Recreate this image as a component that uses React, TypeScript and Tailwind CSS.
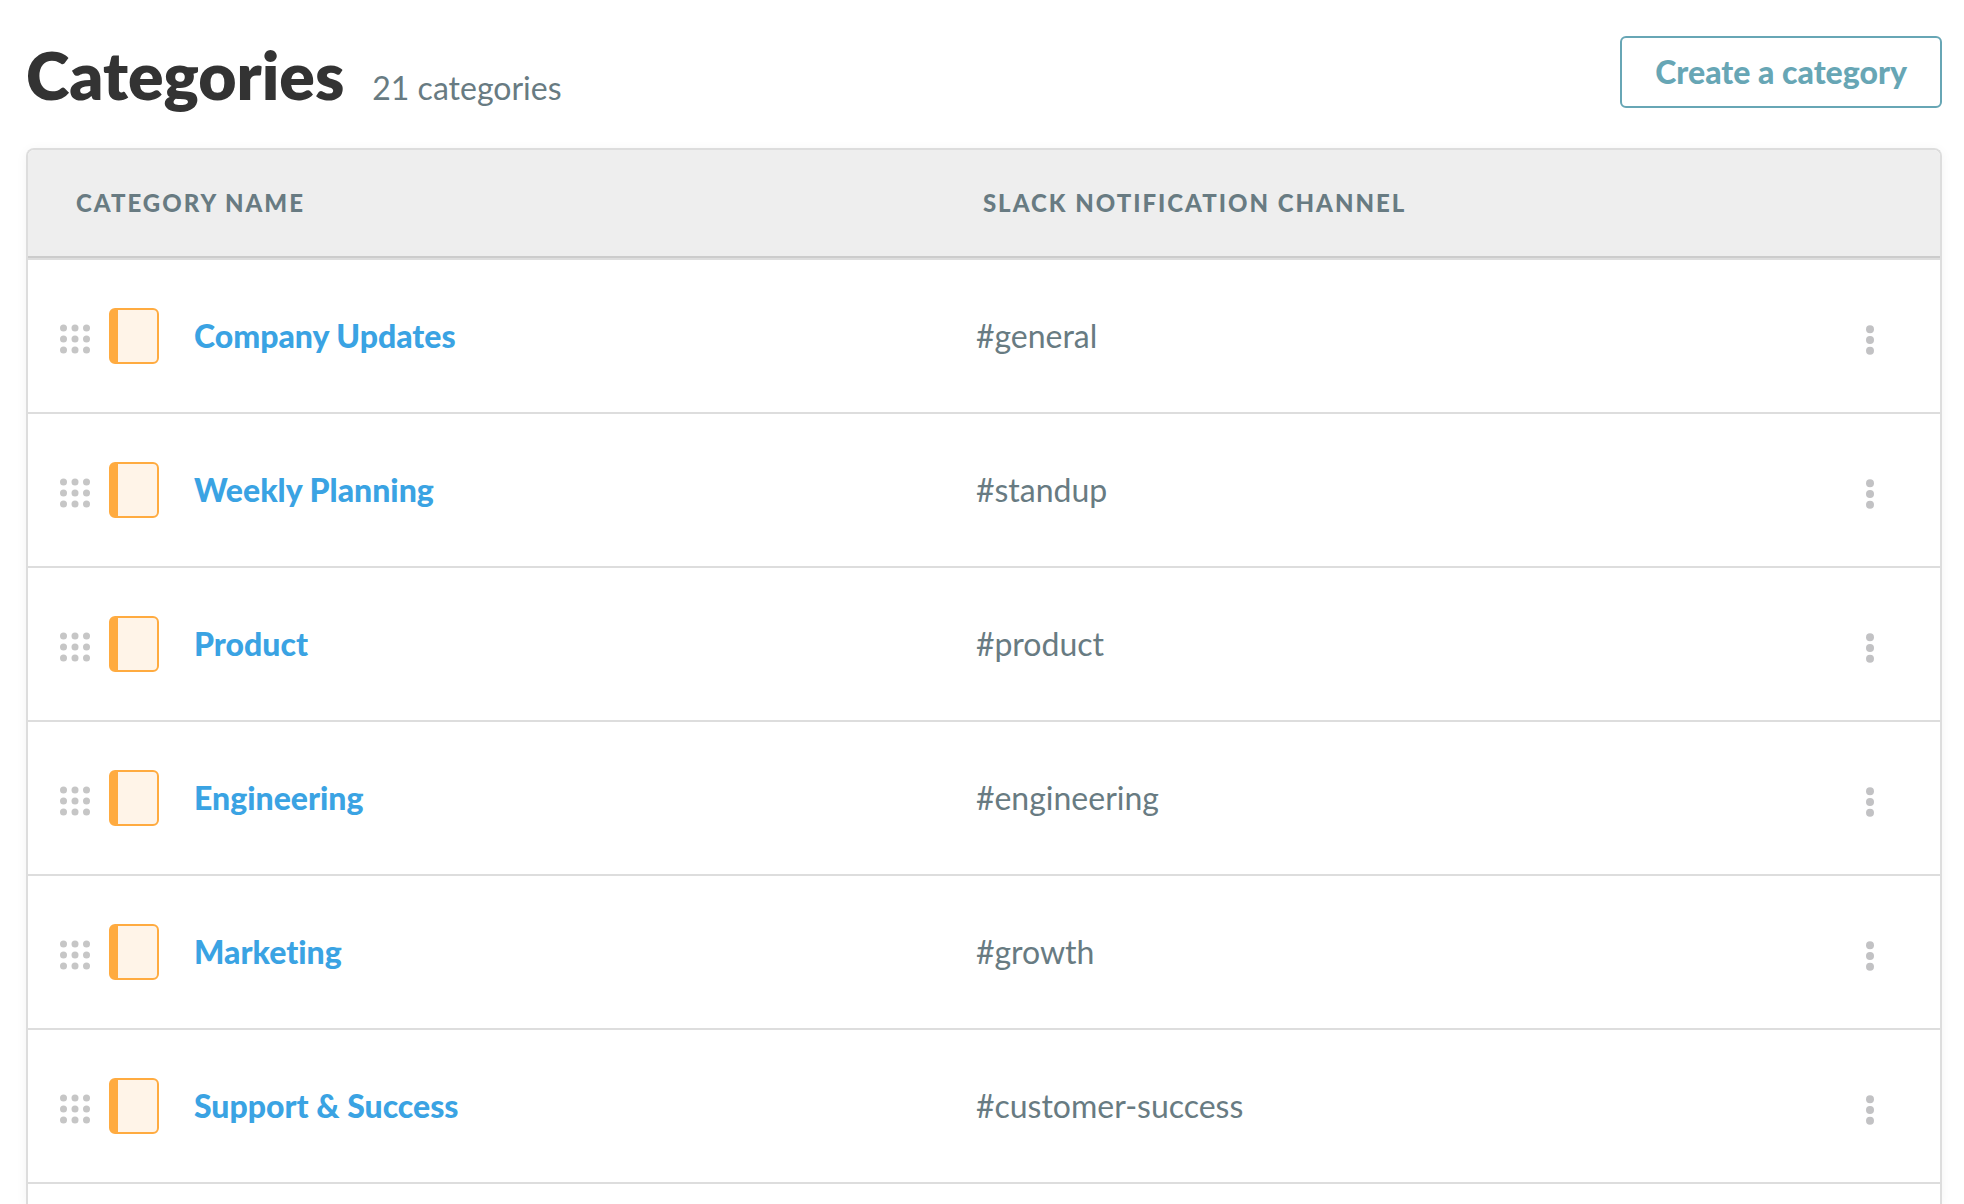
const categories = [
  { name: 'Company Updates', channel: '#general' },
  { name: 'Weekly Planning', channel: '#standup' },
  { name: 'Product', channel: '#product' },
  { name: 'Engineering', channel: '#engineering' },
  { name: 'Marketing', channel: '#growth' },
  { name: 'Support & Success', channel: '#customer-success' },
];

const total = 21;

const DragHandle = () => (
  <button type="button" aria-label="Reorder" className="mt-1.5 cursor-grab text-[#c6c6c6]">
    <svg width="30" height="30" viewBox="0 0 30 30" fill="currentColor" className="block">
      {[4, 15, 26].map((y) =>
        [3.5, 15, 26.5].map((x) => <circle key={`${x}-${y}`} cx={x} cy={y} r="3.5" />)
      )}
    </svg>
  </button>
);

const CategoryIcon = () => (
  <span className="h-14 w-[50px] rounded-md border-2 border-l-[9px] border-[#ffab40] bg-[#fff4e8]" />
);

const RowMenu = ({ name }: { name: string }) => (
  <button type="button" aria-label={`Options for ${name}`} className="mt-2 block text-[#c2c2c4]">
    <svg width="8" height="30" viewBox="0 0 8 30" fill="currentColor" className="block">
      <circle cx="4" cy="4.3" r="4" />
      <circle cx="4" cy="15" r="4" />
      <circle cx="4" cy="25.7" r="4" />
    </svg>
  </button>
);

const App = () => {
  return (
    <main className="flex h-screen flex-col overflow-hidden bg-white pt-9 pr-[22px] pl-[26px] font-['Lato',sans-serif] text-[#687b82] [font-variant-ligatures:no-common-ligatures]">
      {/* Page header */}
      <header className="mb-[34px] flex items-start justify-between">
        <div className="flex items-baseline gap-7">
          <h1 className="text-[66px] leading-[78px] font-extrabold text-[#333333]">Categories</h1>
          <span className="text-[32px] leading-10">{total} categories</span>
        </div>
        <button
          type="button"
          className="h-18 rounded-md border-2 border-[#67a6b5] px-[33px] text-[32px] font-black text-[#67a6b5]"
        >
          Create a category
        </button>
      </header>

      {/* Category list */}
      <section className="flex-1 rounded-t-lg border-2 border-b-0 border-[#dddddd] shadow-[0_2px_12px_rgba(0,0,0,0.05)]">
        <table className="w-full table-fixed border-separate border-spacing-0 text-left">
          <thead>
            <tr className="h-27 text-2xl tracking-[2px] uppercase">
              <th className="w-[49%] rounded-tl-md border-b-2 border-[#cccccc] bg-[#eeeeee] pl-12 font-black">
                Category name
              </th>
              <th className="border-b-2 border-[#cccccc] bg-[#eeeeee] pl-[18px] font-black">
                Slack notification channel
              </th>
              <th className="w-[74px] rounded-tr-md border-b-2 border-[#cccccc] bg-[#eeeeee]" />
            </tr>
          </thead>
          <tbody className="text-[32px] leading-10">
            {categories.map(({ name, channel }) => (
              <tr key={name} className="h-[154px]">
                <td className="border-t-2 border-[#dddddd] pl-8">
                  <div className="flex items-center">
                    <DragHandle />
                    <span className="mr-[35px] ml-[19px] flex">
                      <CategoryIcon />
                    </span>
                    <a href="#" className="font-black text-[#3aa3e3]">
                      {name}
                    </a>
                  </div>
                </td>
                <td className="border-t-2 border-[#dddddd] pl-[11px]">{channel}</td>
                <td className="border-t-2 border-[#dddddd]">
                  <RowMenu name={name} />
                </td>
              </tr>
            ))}
          </tbody>
          <tfoot>
            <tr>
              <td colSpan={3} className="border-t-2 border-[#dddddd]" />
            </tr>
          </tfoot>
        </table>
      </section>
    </main>
  );
};

export default App;
